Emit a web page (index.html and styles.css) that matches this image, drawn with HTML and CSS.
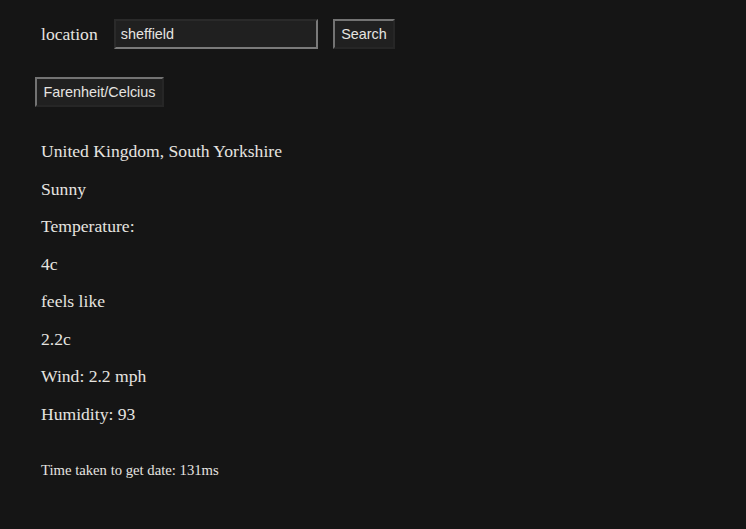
FILE: index.html
```html
<!DOCTYPE html>
<html>
<head>
<meta charset="utf-8">
<link rel="stylesheet" href="styles.css">
</head>
<body>
<div class="app">
  <form class="search-row">
    <label class="label">location</label>
    <input class="field" type="text" value="sheffield">
    <button class="btn" type="button">Search</button>
  </form>
  <div class="toggle-row">
    <button class="btn" type="button">Farenheit/Celcius</button>
  </div>
  <div class="info">
    <p class="line">United Kingdom, South Yorkshire</p>
    <p class="line">Sunny</p>
    <p class="line">Temperature:</p>
    <p class="line">4c</p>
    <p class="line">feels like</p>
    <p class="line">2.2c</p>
    <p class="line">Wind: 2.2 mph</p>
    <p class="line">Humidity: 93</p>
  </div>
  <p class="timing">Time taken to get date: 131ms</p>
</div>
</body>
</html>
```
FILE: styles.css
```css
html, body {
  margin: 0;
  padding: 0;
  background: #151515;
}
body {
  color: #e6e4e0;
  font-family: "Liberation Serif", "Times New Roman", serif;
  font-size: 17.6px;
}
.app {
  padding: 19px 35px 0 35px;
}
.search-row {
  display: flex;
  align-items: center;
  margin: 0;
  padding-left: 6px;
}
.label {
  margin-right: 16px;
}
.field {
  box-sizing: border-box;
  width: 204px;
  height: 30px;
  margin: 0 15px 0 0;
  padding: 0 5px;
  background: #202020;
  color: #e6e4e0;
  font-family: "Liberation Sans", Arial, sans-serif;
  font-size: 14.4px;
  border: 2px solid;
  border-top-color: #2a2a2a;
  border-left-color: #2a2a2a;
  border-bottom-color: #7a7a7a;
  border-right-color: #7a7a7a;
  outline: none;
}
.btn {
  box-sizing: border-box;
  height: 30px;
  padding: 0 6.5px;
  background: #202020;
  color: #e6e4e0;
  font-family: "Liberation Sans", Arial, sans-serif;
  font-size: 14.4px;
  border: 2px solid;
  border-top-color: #737373;
  border-left-color: #737373;
  border-bottom-color: #262626;
  border-right-color: #262626;
}
.toggle-row {
  margin-top: 28px;
  display: flex;
}
.info {
  padding-left: 6px;
  margin-top: 34px;
}
.line {
  margin: 0 0 17.3px 0;
  line-height: 20.2px;
}
.timing {
  padding-left: 6px;
  margin: 38px 0 0 0;
  font-size: 14.7px;
}
```
